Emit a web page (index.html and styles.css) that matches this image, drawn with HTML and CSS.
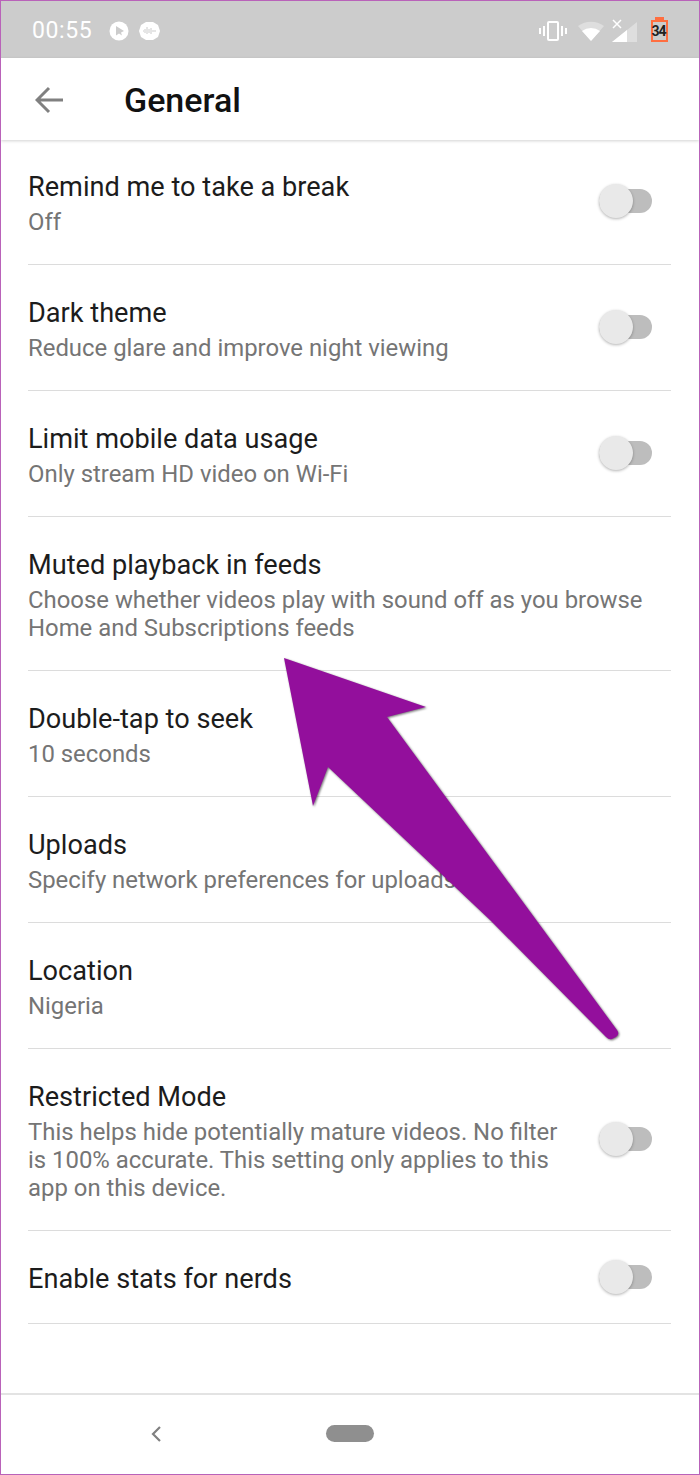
FILE: index.html
```html
<!DOCTYPE html>
<html lang="en">
<head>
  <meta charset="UTF-8" />
  <title>General</title>
  <link rel="stylesheet" href="styles.css">
</head>
<body>
  <div class="phone">
    <div class="statusBar">
      <span class="clock">00:55</span>
      <svg class="notif" width="60" height="20" viewBox="0 0 60 20">
        <circle cx="10" cy="10" r="9.500" fill="#fff"/>
        <path d="M7 5l8 5-3 1.500 1 3-3-2-3 2z" fill="#ccc"/>
        <path d="M37 1h7l5 3 2 6-2 6-5 3h-7l-5-3-2-6 2-6z" fill="#fff"/>
        <path d="M34 10h1M36 8v4M38 6v7M40 8v4M42 7v6M44 9v2M46 9v2" stroke="#ccc" stroke-width="1"/>
      </svg>
      <div class="statusRight">
        <svg width="100" height="28" viewBox="0 0 100 28">
          <g fill="none" stroke="#fff" stroke-width="2">
            <rect x="9" y="5" width="10" height="18" rx="1"/>
            <path d="M5 9v10M1 11v6M23 9v10M27 11v6"/>
          </g>
          <path d="M39 9a22 22 0 0 1 26 0l-13 15z" fill="#fff" fill-opacity=".35"/>
          <path d="M43 14a15 15 0 0 1 18 0l-9 10z" fill="#fff"/>
          <path d="M98 5v20H73z" fill="#fff" fill-opacity=".35"/>
          <path d="M88 13v12H73z" fill="#fff"/>
          <path d="M74 3l8 8M82 3l-8 8" stroke="#fff" stroke-width="1.500" fill="none"/>
        </svg>
        <div class="battery"><span>34</span></div>
      </div>
    </div>

    <header class="appBar">
      <svg class="backIcon" width="28" height="28" viewBox="0 0 28 28">
        <path d="M28 14H3M14 2L2 14l12 12" fill="none" stroke="#808080" stroke-width="3"/>
      </svg>
      <h1>General</h1>
    </header>

    <div class="settings">
      <div class="row first">
        <div class="rowText"><div class="title">Remind me to take a break</div><div class="sub">Off</div></div>
        <div class="toggle"></div>
      </div>
      <div class="row">
        <div class="rowText"><div class="title">Dark theme</div><div class="sub">Reduce glare and improve night viewing</div></div>
        <div class="toggle"></div>
      </div>
      <div class="row">
        <div class="rowText"><div class="title">Limit mobile data usage</div><div class="sub">Only stream HD video on Wi-Fi</div></div>
        <div class="toggle"></div>
      </div>
      <div class="row">
        <div class="rowText"><div class="title">Muted playback in feeds</div><div class="sub">Choose whether videos play with sound off as you browse<br>Home and Subscriptions feeds</div></div>
      </div>
      <div class="row">
        <div class="rowText"><div class="title">Double-tap to seek</div><div class="sub">10 seconds</div></div>
      </div>
      <div class="row">
        <div class="rowText"><div class="title">Uploads</div><div class="sub">Specify network preferences for uploads</div></div>
      </div>
      <div class="row">
        <div class="rowText"><div class="title">Location</div><div class="sub">Nigeria</div></div>
      </div>
      <div class="row">
        <div class="rowText"><div class="title">Restricted Mode</div><div class="sub">This helps hide potentially mature videos. No filter<br>is 100% accurate. This setting only applies to this<br>app on this device.</div></div>
        <div class="toggle"></div>
      </div>
      <div class="row last">
        <div class="rowText"><div class="title">Enable stats for nerds</div></div>
        <div class="toggle"></div>
      </div>
    </div>

    <nav class="navBar">
      <svg class="navBack" width="12" height="18" viewBox="0 0 12 18">
        <path d="M10 2L3 9l7 7" fill="none" stroke="#808080" stroke-width="2.200"/>
      </svg>
      <div class="navPill"></div>
    </nav>

    <svg class="arrow" width="700" height="1475" viewBox="0 0 700 1475">
      <path d="M284 658L426 707 387 717 617 1030Q620 1034 616 1037L612 1039Q609 1040 606 1037L490 920 328 767 313 806z" fill="#930f9c"/>
    </svg>
  </div>
</body>
</html>
```

FILE: styles.css
```css
html, body {
  margin: 0;
  padding: 0;
  background: #fff;
}

.phone {
  position: relative;
  box-sizing: border-box;
  width: 700px;
  height: 1475px;
  border: 1px solid #b962b9;
  display: flex;
  flex-direction: column;
  font-family: Roboto, "Liberation Sans", sans-serif;
  overflow: hidden;
}

.statusBar {
  height: 57px;
  flex: none;
  background: #cccccc;
  color: #fff;
  display: flex;
  align-items: center;
  padding: 2px 31px 0;
  box-sizing: border-box;
}

.clock {
  font-size: 23px;
  letter-spacing: 0.6px;
  width: 77px;
}

.statusRight {
  margin-left: auto;
  display: flex;
  align-items: center;
}

.battery {
  position: relative;
  box-sizing: border-box;
  width: 17px;
  height: 22px;
  margin-left: 12px;
  border: 2px solid #ff6e40;
  color: #222;
  font-size: 14px;
  font-weight: 700;
  line-height: 18px;
  text-align: center;
  letter-spacing: -1px;
}

.battery::before {
  content: "";
  position: absolute;
  left: 2px;
  top: -5px;
  width: 9px;
  height: 3px;
  background: #ff6e40;
}

.battery span {
  display: block;
  margin-left: -2px;
}

.appBar {
  height: 82px;
  flex: none;
  box-sizing: border-box;
  display: flex;
  align-items: center;
  padding: 2px 0 0 34px;
  box-shadow: 0 1px 3px rgba(0, 0, 0, 0.18);
  position: relative;
  background: #fff;
}

.appBar h1 {
  margin: 0 0 0 61px;
  font-size: 34px;
  font-weight: 500;
  color: #111;
}

.settings {
  flex: 1;
}

.row {
  margin: 0 28px 0 27px;
  padding: 30px 19px 28px 0;
  border-bottom: 1px solid #dcdcdc;
  display: flex;
  align-items: center;
  justify-content: space-between;
}

.row.first {
  padding-top: 29px;
  padding-bottom: 28px;
}

.row.last {
  padding-bottom: 26px;
}

.title {
  font-size: 27.15px;
  line-height: 36px;
  color: #1c1c1c;
}

.sub {
  margin-top: 3px;
  font-size: 23.9px;
  line-height: 28px;
  color: #757575;
}

.toggle {
  position: relative;
  width: 53px;
  height: 24px;
  margin-bottom: 4px;
  border-radius: 12px;
  background: #bdbdbd;
  flex: none;
}

.toggle::after {
  content: "";
  position: absolute;
  left: 0;
  top: -5px;
  width: 34px;
  height: 34px;
  border-radius: 50%;
  background: #e9e9e9;
  box-shadow: 0 1px 3px rgba(0, 0, 0, 0.3);
}

.navBar {
  height: 81px;
  flex: none;
  border-top: 2px solid #e3e3e3;
  box-sizing: border-box;
  display: flex;
  align-items: center;
  padding: 0 0 2px 149px;
}

.navBack {
  display: block;
}

.navPill {
  width: 48px;
  height: 17px;
  border-radius: 9px;
  background: #8f8f8f;
  margin-left: 164px;
}

.arrow {
  position: absolute;
  left: -1px;
  top: -1px;
  filter: drop-shadow(1px 1px 1px rgba(0, 0, 0, 0.55));
  pointer-events: none;
}
```
